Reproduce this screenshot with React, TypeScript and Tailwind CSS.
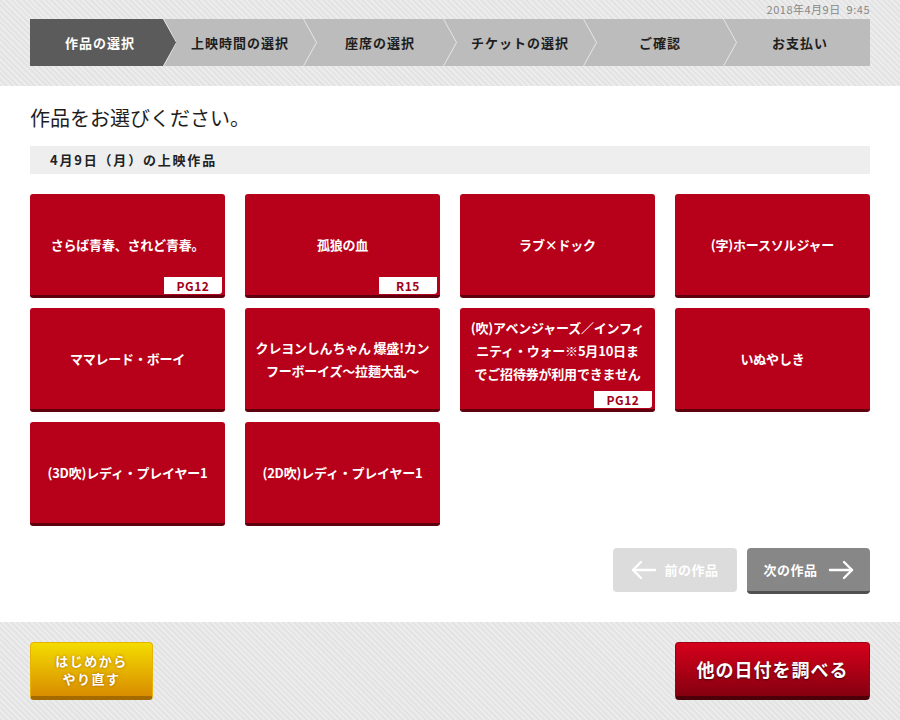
import React from 'react';

const steps = ['作品の選択', '上映時間の選択', '座席の選択', 'チケットの選択', 'ご確認', 'お支払い'];

interface Movie {
  lines: string[];
  rating?: string;
  lift?: boolean;
}

const movies: Movie[] = [
  { lines: ['さらば青春、されど青春。'], rating: 'PG12' },
  { lines: ['孤狼の血'], rating: 'R15' },
  { lines: ['ラブ×ドック'] },
  { lines: ['(字)ホースソルジャー'] },
  { lines: ['ママレード・ボーイ'] },
  { lines: ['クレヨンしんちゃん 爆盛!カン', 'フーボーイズ〜拉麺大乱〜'] },
  { lines: ['(吹)アベンジャーズ／インフィ', 'ニティ・ウォー※5月10日ま', 'でご招待券が利用できません'], rating: 'PG12', lift: true },
  { lines: ['いぬやしき'] },
  { lines: ['(3D吹)レディ・プレイヤー1'] },
  { lines: ['(2D吹)レディ・プレイヤー1'] },
];

const pattern =
  'bg-[repeating-linear-gradient(45deg,#e3e3e3_0px,#e3e3e3_2px,#ececec_2px,#ececec_4px)]';

const Arrow: React.FC<{ dir: 'left' | 'right' }> = ({ dir }) => (
  <svg width="26" height="20" viewBox="0 0 26 20" fill="none" stroke="white" strokeWidth="2.4" strokeLinecap="round" strokeLinejoin="round">
    <path d="M2 10 H24" />
    {dir === 'left' ? <path d="M10 2 L2 10 L10 18" /> : <path d="M16 2 L24 10 L16 18" />}
  </svg>
);

const App: React.FC = () => {
  return (
    <div className="w-[900px] h-[720px] flex flex-col bg-white text-[#222] [font-family:'Noto_Sans_CJK_JP','Noto_Sans',sans-serif]">
      {/* header */}
      <header className={`h-[86px] px-[30px] ${pattern}`}>
        <div className="h-[19px] flex items-center justify-end text-[11px] text-[#888] tracking-[0.5px]">
          2018年4月9日&nbsp;&nbsp;9:45
        </div>
        <div className="h-[47px] flex bg-[#bcbcbc]">
          {steps.map((s, i) => (
            <div key={s} className={`relative flex-1 flex items-center justify-center ${i === 0 ? 'z-10' : ''}`}>
              {i === 0 && (
                <div className="absolute inset-y-0 left-0 right-[-7px] bg-[#5b5b5b] [clip-path:polygon(0_0,calc(100%-14px)_0,100%_50%,calc(100%-14px)_100%,0_100%)]" />
              )}
              <span className={`relative text-[13px] font-bold tracking-[1px] ${i === 0 ? 'text-white' : 'text-[#1e1e1e]'}`}>{s}</span>
              {i < steps.length - 1 && (
                <svg className="absolute top-0 right-[-7px] z-20" width="14" height="47" viewBox="0 0 14 47" fill="none">
                  <polyline points="0.5,0 13.5,23.5 0.5,47" stroke="#e6e6e6" strokeWidth="1" />
                </svg>
              )}
            </div>
          ))}
        </div>
      </header>

      {/* main */}
      <main className="flex-1 px-[30px] pt-[18px]">
        <h1 className="text-[20px] leading-[28px] font-normal text-[#1e1e1e]">作品をお選びください。</h1>
        <div className="mt-[14px] h-[28px] bg-[#eeeeee] flex items-center pl-[20px] text-[13px] font-bold tracking-[1.8px]">
          4月9日（月）の上映作品
        </div>

        <div className="mt-[20px] grid grid-cols-4 gap-x-[20px] gap-y-[10px]">
          {movies.map(m => (
            <button
              key={m.lines.join('')}
              className="relative h-[104px] rounded-[3px] bg-[#b70019] border-b-[3px] border-[#5e000d] px-[2px] flex items-center justify-center text-center text-white text-[13px] font-bold leading-[23px] tracking-[-0.2px]"
            >
              <span className={`flex flex-col items-center whitespace-nowrap ${m.lift ? 'mb-[16px]' : ''}`}>
                {m.lines.map(l => (
                  <span key={l}>{l}</span>
                ))}
              </span>
              {m.rating && (
                <span className="absolute right-[3px] bottom-[1px] w-[58px] h-[17px] bg-white rounded-br-[3px] flex items-center justify-center text-[12px] font-bold text-[#a30018] tracking-[0.5px] leading-none">
                  {m.rating}
                </span>
              )}
            </button>
          ))}
        </div>

        <div className="mt-[22px] flex justify-end gap-[10px]">
          <button className="w-[124px] h-[44px] rounded-[4px] bg-[#dcdcdc] flex items-center justify-center gap-[7px] text-white text-[13px] font-bold tracking-[0.5px]">
            <Arrow dir="left" />
            前の作品
          </button>
          <button className="w-[123px] h-[46px] rounded-[4px] bg-[#878787] border-b-[3px] border-[#505050] flex items-center justify-center gap-[10px] text-white text-[13px] font-bold tracking-[0.5px]">
            次の作品
            <Arrow dir="right" />
          </button>
        </div>
      </main>

      {/* footer */}
      <footer className={`h-[98px] px-[30px] pt-[20px] flex justify-between items-start ${pattern}`}>
        <button className="w-[123px] h-[58px] rounded-[4px] border border-[#e6b400] border-b-[4px] border-b-[#a46a00] bg-[linear-gradient(#f3dc00,#d98c00)] flex flex-col items-center justify-center text-white text-[13px] font-bold leading-[18px] tracking-[1.5px] [text-shadow:0_0_3px_rgba(150,80,0,0.8)]">
          <span>はじめから</span>
          <span>やり直す</span>
        </button>
        <button className="w-[195px] h-[58px] rounded-[4px] border border-[#9c0012] border-b-[4px] border-b-[#4d0008] bg-[linear-gradient(#d6001b,#850010)] flex items-center justify-center text-white text-[18px] font-bold tracking-[1px] [text-shadow:0_1px_2px_rgba(0,0,0,0.6)]">
          他の日付を調べる
        </button>
      </footer>
    </div>
  );
};

export default App;
